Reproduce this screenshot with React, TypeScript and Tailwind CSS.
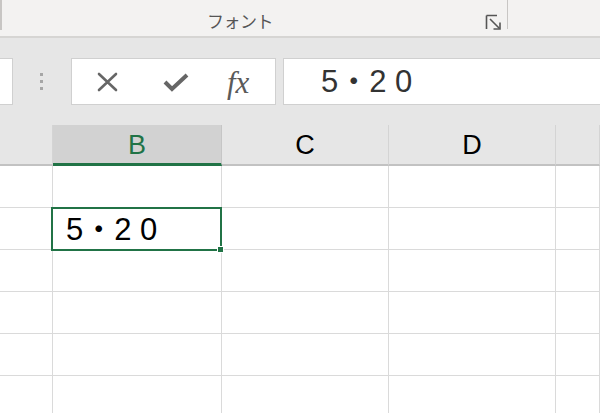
import React from 'react';

const cols = [
  { key: 'A', w: 'w-[53px]', label: '' },
  { key: 'B', w: 'w-[169px]', label: 'B' },
  { key: 'C', w: 'w-[167px]', label: 'C' },
  { key: 'D', w: 'w-[167px]', label: 'D' },
  { key: 'E', w: 'flex-1', label: '' },
];

const rows = [1, 2, 3, 4, 5, 6];

const FONT = "font-['Liberation_Sans','Noto_Sans_CJK_JP',sans-serif]";

export default function App() {
  return (
    <div className={`w-[600px] h-[413px] overflow-hidden bg-white ${FONT}`}>
      {/* ribbon group */}
      <div className="flex h-[38px] bg-[#f3f2f1] border-b-2 border-[#d6d5d3]">
        <div className="flex w-[507px] items-start border-l-2 border-[#c8c6c4] h-[30px]">
          <span className="ml-[205px] mt-[10px] text-[17px] leading-[22px] tracking-[-0.5px] text-[#555] font-['Noto_Sans_CJK_JP',sans-serif]">
            フォント
          </span>
          <svg className="ml-auto mr-[5px] mt-[14px]" width="17" height="16" viewBox="0 0 17 16" fill="none" stroke="#555" strokeWidth="1.6">
            <path d="M1.5 1.5H12M1.5 1.5V15" />
            <path d="M5 5L14.5 14.5" />
            <path d="M15 8.5V15H8.5" />
          </svg>
        </div>
        <div className="w-[1px] h-[29px] bg-[#c8c6c4]" />
      </div>

      {/* formula bar */}
      <div className="flex h-[87px] bg-[#e6e6e6] pt-[20px]">
        <div className="flex h-[47px] w-full items-stretch">
          <div className="w-[13px] bg-white border border-l-0 border-[#d0d0d0]" />
          <div className="flex w-[58px] flex-col items-center justify-center gap-[4px] pr-[1px]">
            <div className="w-[3px] h-[3px] bg-[#a6a6a6]" />
            <div className="w-[3px] h-[3px] bg-[#a6a6a6]" />
            <div className="w-[3px] h-[3px] bg-[#a6a6a6]" />
          </div>
          <div className="flex w-[205px] items-center bg-white border border-[#d0d0d0]">
            <svg className="ml-[25px]" width="21" height="20" viewBox="0 0 21 20" stroke="#666" strokeWidth="2.6" strokeLinecap="round">
              <path d="M2 2L19 18M19 2L2 18" />
            </svg>
            <svg className="ml-[45px]" width="26" height="20" viewBox="0 0 26 20" fill="none" stroke="#666" strokeWidth="4" strokeLinejoin="miter">
              <path d="M2 10L9 17L24 3" />
            </svg>
            <span className="ml-[38px] mt-[2px] font-['Liberation_Serif',serif] italic text-[31px] leading-none text-[#5a5a5a]">
              fx
            </span>
          </div>
          <div className="ml-[7px] flex flex-1 items-center bg-white border border-r-0 border-[#d0d0d0] pl-[37px]">
            <span className="text-[31px] leading-none text-[#333]">5・2 0</span>
          </div>
        </div>
      </div>

      {/* column headers */}
      <div className="flex h-[41px] bg-[#e6e6e6]">
        {cols.map((c) =>
          c.key === 'B' ? (
            <div
              key={c.key}
              className={`${c.w} flex items-center justify-center bg-[#d2d2d2] border-r border-[#c6c6c6] border-b-[3px] border-b-[#217346] text-[27px] text-[#217346] pt-[2px]`}
            >
              {c.label}
            </div>
          ) : (
            <div
              key={c.key}
              className={`${c.w} flex items-center justify-center border-r border-[#d4d4d4] border-b-2 border-b-[#c2c2c2] text-[27px] text-black pt-[2px]`}
            >
              {c.label}
            </div>
          )
        )}
      </div>

      {/* grid */}
      <div className="flex flex-col">
        {rows.map((r) => (
          <div key={r} className="flex h-[42px] border-b border-[#dadada]">
            {cols.map((c) => (
              <div key={c.key} className={`${c.w} relative border-r border-[#dadada]`}>
                {r === 2 && c.key === 'B' && (
                  <div className="absolute -left-[2px] -top-[1px] w-[171px] h-[44px] border-2 border-[#217346] z-10 flex items-center pl-[13px]">
                    <span className="text-[31px] leading-none text-black">5・2 0</span>
                    <div className="absolute -right-[4px] -bottom-[4px] w-[7px] h-[7px] bg-[#217346] border border-white" />
                  </div>
                )}
              </div>
            ))}
          </div>
        ))}
      </div>
    </div>
  );
}
